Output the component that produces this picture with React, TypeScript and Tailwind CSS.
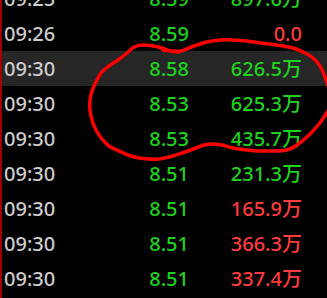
import React from 'react';

interface Tick {
    time: string;
    price: string;
    volume: string;
    up: boolean;
}

const ticks: Tick[] = [
    { time: '09:25', price: '8.59', volume: '897.6万', up: false },
    { time: '09:26', price: '8.59', volume: '0.0', up: true },
    { time: '09:30', price: '8.58', volume: '626.5万', up: false },
    { time: '09:30', price: '8.53', volume: '625.3万', up: false },
    { time: '09:30', price: '8.53', volume: '435.7万', up: false },
    { time: '09:30', price: '8.51', volume: '231.3万', up: false },
    { time: '09:30', price: '8.51', volume: '165.9万', up: true },
    { time: '09:30', price: '8.51', volume: '366.3万', up: true },
    { time: '09:30', price: '8.51', volume: '337.4万', up: true },
];

// hand drawn marker loop, clockwise from the top-left
const loop: [number, number][] = [
    [163, 50], [172, 51], [181, 51], [189, 48], [197, 45], [207, 42], [220, 40], [233, 40],
    [247, 41], [260, 43], [277, 45], [293, 48], [305, 53], [313, 58], [320, 66], [325, 77],
    [330, 92], [331, 104], [326, 114], [319, 124], [308, 136], [297, 145], [287, 150],
    [273, 151], [260, 151], [247, 150], [233, 148], [222, 145], [213, 144], [204, 145],
    [196, 148], [188, 151], [179, 154], [169, 157], [159, 159], [149, 159], [139, 158],
    [128, 155], [117, 150], [109, 146], [102, 139], [96, 130], [92, 120], [90, 110],
    [90, 100], [92, 91], [96, 82], [101, 73], [109, 66], [118, 60], [127, 53], [134, 47],
    [143, 45], [153, 46], [162, 48], [170, 51], [178, 52],
];

function smoothPath(pts: [number, number][]) {
    let d = `M ${pts[0][0]} ${pts[0][1]}`;
    for (let i = 0; i < pts.length - 1; i++) {
        const p0 = pts[Math.max(i - 1, 0)];
        const p1 = pts[i];
        const p2 = pts[i + 1];
        const p3 = pts[Math.min(i + 2, pts.length - 1)];
        const c1x = p1[0] + (p2[0] - p0[0]) / 6;
        const c1y = p1[1] + (p2[1] - p0[1]) / 6;
        const c2x = p2[0] - (p3[0] - p1[0]) / 6;
        const c2y = p2[1] - (p3[1] - p1[1]) / 6;
        d += ` C ${c1x} ${c1y} ${c2x} ${c2y} ${p2[0]} ${p2[1]}`;
    }
    return d;
}

export default function App() {
    return (
        <div className="relative w-[327px] h-[298px] overflow-hidden bg-black border-l-2 border-[#a00000]">
            <div className="-mt-[19px]" style={{ fontFamily: '"Noto Sans", "Noto Sans CJK SC", sans-serif' }}>
                {ticks.map((t, i) => (
                    <div
                        key={i}
                        className={`flex items-center h-[35px] text-[20px] leading-none font-medium ${i === 2 ? 'bg-[#262626]' : ''}`}
                    >
                        <div className="flex justify-between w-[187px] pl-[2px]">
                            <span className="text-[#cccccc]">{t.time}</span>
                            <span className="text-[#1ed21e]">{t.price}</span>
                        </div>
                        <span className={`w-[113px] text-right ${t.up ? 'text-[#ff3c3c]' : 'text-[#1ed21e]'}`}>
                            {t.volume}
                        </span>
                    </div>
                ))}
            </div>

            <svg className="absolute left-[-2px] top-0 pointer-events-none" width="327" height="298" viewBox="0 0 327 298">
                <path d={smoothPath(loop)} fill="none" stroke="#ff0000" strokeWidth={3.5} strokeLinecap="round" strokeLinejoin="round" />
            </svg>
        </div>
    );
}
